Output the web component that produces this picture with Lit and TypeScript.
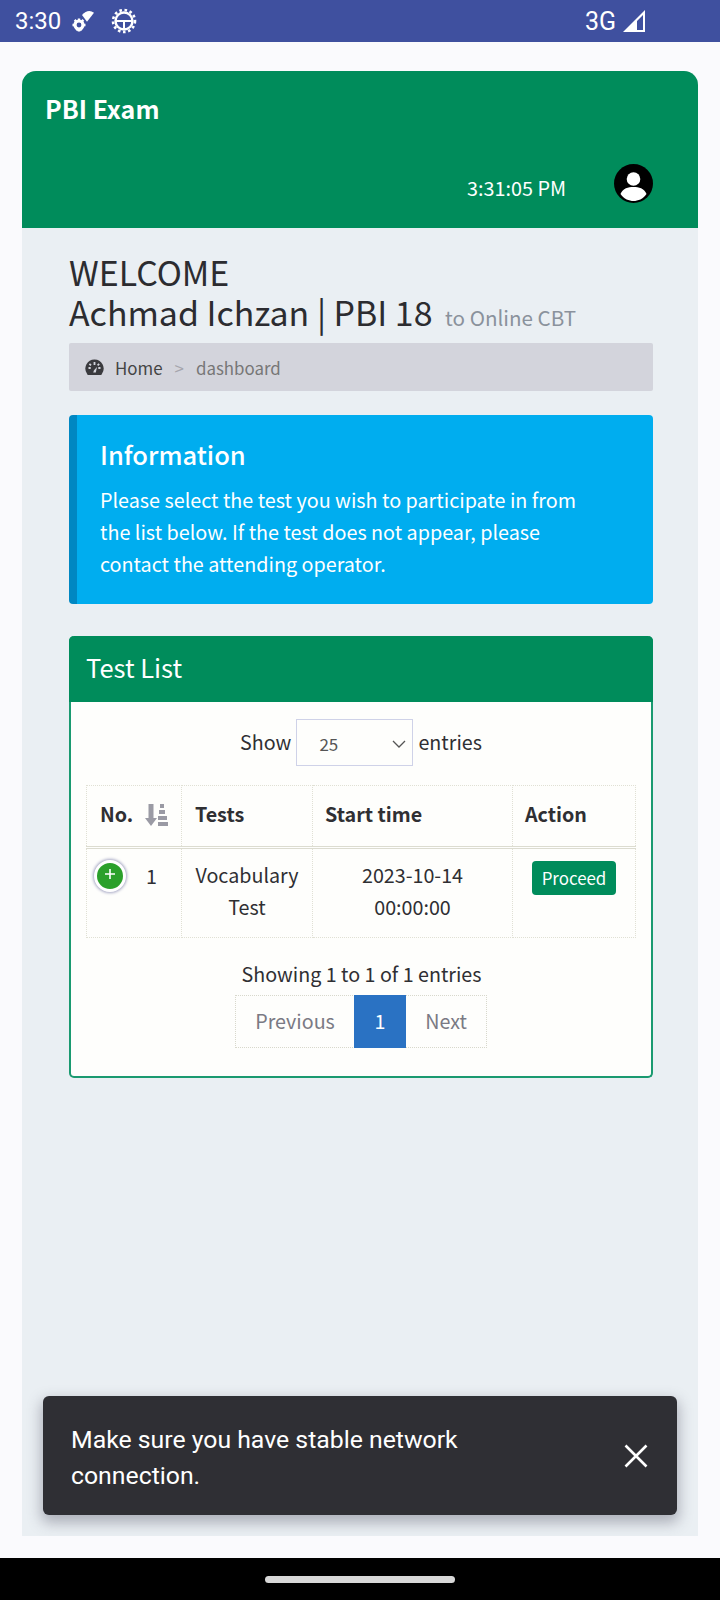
import { LitElement, html, css } from "lit";
import { customElement } from "lit/decorators.js";

@customElement("app-root")
export class AppRoot extends LitElement {
  static styles = css`
    :host {
      display: flex;
      flex-direction: column;
      width: 720px;
      height: 1600px;
      overflow: hidden;
      font-family: "Noto Sans CJK SC", "Noto Sans", sans-serif;
      color: #2f2f33;
      background: #fafafd;
    }
    * { box-sizing: border-box; }
    .status {
      height: 42px;
      flex: none;
      background: #3f509f;
      color: #fff;
      font-family: Roboto, sans-serif;
      font-size: 24px;
      display: flex;
      align-items: center;
      padding: 0 75px 0 15px;
      gap: 11px;
    }
    .status .spacer { flex: 1; }
    .status .net { font-size: 25px; margin-right: -4px; }
    .view {
      flex: 1;
      min-height: 0;
      padding: 29px 22px 22px;
      display: flex;
    }
    .shell {
      flex: 1;
      position: relative;
      overflow: hidden;
      background: #eaeff3;
      border-radius: 14px 14px 0 0;
    }
    .top {
      height: 157px;
      background: #008c5b;
      color: #fff;
      padding: 20px 45px 0 23px;
      display: flex;
      flex-direction: column;
    }
    .brand { font-size: 25px; font-weight: 700; line-height: 34px; height: 73px; }
    .top-row { display: flex; align-items: center; justify-content: flex-end; gap: 48px; }
    .clock { font-size: 19.8px; line-height: 28px; padding-top: 8px; }
    .avatar { width: 39px; height: 39px; display: block; }
    .content { padding: 24px 45px 0 47px; }
    h1 {
      margin: 0;
      font-size: 33.9px;
      font-weight: 400;
      line-height: 40px;
      color: #2c2c30;
    }
    h1 small { font-size: 20.6px; color: #8a929c; margin-left: 5px; font-weight: 400; }
    .crumb {
      margin-top: 6px;
      height: 48px;
      background: #d3d4dc;
      border-radius: 2px;
      display: flex;
      align-items: center;
      padding: 0 16px;
      font-size: 16.9px;
      color: #444;
    }
    .crumb svg { width: 19px; height: 17px; margin: 0 11px 0 0; }
    .crumb .sep { color: #a5a5ad; margin: 0 12px; }
    .crumb .cur { color: #777; }
    .callout {
      margin-top: 24px;
      height: 189px;
      background: #00adef;
      border-left: 8px solid #0087c2;
      border-radius: 4px;
      color: #fff;
      padding: 21px 60px 0 23px;
    }
    .callout h4 { margin: 0 0 12px; font-size: 25.5px; font-weight: 500; line-height: 36px; }
    .callout p { margin: 0; font-size: 19.75px; line-height: 32px; }
    .card {
      margin-top: 32px;
      height: 442px;
      border: 2px solid #1a9a70;
      border-top: 0;
      border-radius: 5px;
      background: #fefefc;
    }
    .card-head {
      margin: 0 -2px;
      height: 66px;
      background: #008c5b;
      border-radius: 5px 5px 0 0;
      color: #fff;
      font-size: 25.5px;
      line-height: 62px;
      padding-left: 17px;
    }
    .length {
      margin-top: 17px;
      display: flex;
      align-items: center;
      justify-content: center;
      gap: 5px;
      font-size: 19.7px;
      line-height: 47px;
    }
    .length > span { margin-top: -2px; }
    .select {
      width: 117px;
      height: 47px;
      border: 1px solid #cfd2e8;
      display: flex;
      align-items: center;
      justify-content: space-between;
      padding: 2px 6px 0 22px;
      font-size: 17px;
      color: #555;
    }
    .select svg { width: 14px; height: 8px; }
    table {
      margin: 19px 0 0 15px;
      width: 549px;
      border-collapse: collapse;
      table-layout: fixed;
      font-size: 19.7px;
    }
    th, td { border: 1px dotted #e0e0d4; }
    th {
      height: 62px;
      font-weight: 700;
      text-align: left;
      padding: 0 12px 5px;
      border-bottom: 3px double #dcdcd0;
    }
    th.tests { padding-left: 13px; }
    td { height: 90px; text-align: center; line-height: 32px; padding: 10px 8px 0; vertical-align: top; }
    th.no { padding-left: 13px; }
    .no-in { display: flex; align-items: center; justify-content: space-between; }
    .no-in svg { width: 24px; height: 24px; margin-top: 3px; }
    .rowno { display: flex; align-items: center; gap: 20px; margin-left: 1px; }
    td.first { padding: 11px 0 0 6px; }
    .plus {
      width: 32px;
      height: 32px;
      flex: none;
      border-radius: 50%;
      background: #2ba02b;
      border: 3px solid #fff;
      box-shadow: 0 0 3px 1px #a6a7c4;
      color: #fff;
      display: flex;
      align-items: center;
      justify-content: center;
    }
    .plus svg { width: 12px; height: 12px; margin-top: -4px; }
    .btn {
      display: inline-block;
      width: 84px;
      height: 34px;
      background: #008c5b;
      color: #fff;
      border-radius: 4px;
      font-size: 16.9px;
      line-height: 33px;
      margin-top: 2px;
    }
    .info { margin-top: 20px; text-align: center; font-size: 19.7px; line-height: 32px; padding-left: 1px; }
    .pager {
      margin: 5px 0 0 164px;
      display: flex;
      width: 252px;
      height: 53px;
      border: 1px dotted #d8d8cc;
      font-size: 19.7px;
      color: #7a7a84;
      line-height: 49px;
      text-align: center;
    }
    .pager .prev { width: 118px; }
    .pager .cur { width: 52px; background: #2a72c3; color: #fff; margin: -1px 0; line-height: 51px; }
    .pager .next { flex: 1; }
    .toast {
      position: absolute;
      left: 21px;
      top: 1325px;
      width: 634px;
      height: 119px;
      background: #2f2f34;
      color: #fff;
      border-radius: 6px;
      box-shadow: 0 6px 14px 2px rgba(60, 60, 80, 0.35);
      font-family: Roboto, sans-serif;
      font-size: 24.8px;
      line-height: 36px;
      display: flex;
      align-items: center;
      padding: 4px 29px 0 28px;
      justify-content: space-between;
    }
    .toast span { width: 440px; }
    .toast svg { width: 24px; height: 24px; margin-top: -4px; }
    .nav {
      height: 42px;
      flex: none;
      background: #000;
      display: flex;
      align-items: center;
      justify-content: center;
    }
    .nav i { display: block; width: 190px; height: 7px; border-radius: 4px; background: #d8d8d8; }
  `;

  render() {
    return html`
      <div class="status">
        <span>3:30</span>
        <svg width="26" height="24" viewBox="0 0 26 24" fill="#fff">
          <path d="M10 6 Q16 -0.5 22 3.7 L15 12.7 Z" />
          <circle cx="7" cy="16" r="4" fill="none" stroke="#fff" stroke-width="3.2" />
          <path d="M5.8 9.5h2.4v2.5H5.8zM5.8 20h2.4v2.5H5.8zM0.5 14.8H3v2.4H.5zM11 14.8h2.5v2.4H11z" />
          <path d="M1.8 11.8l1.7-1.7 1.6 1.6-1.7 1.7zM10.5 20.5l-1.7 1.7-1.6-1.6 1.7-1.7zM12.2 11.8l-1.7-1.7-1.6 1.6 1.7 1.7zM3.5 20.5l1.7 1.7 1.6-1.6-1.7-1.7z" />
        </svg>
        <svg width="26" height="26" viewBox="0 0 26 26" fill="none" stroke="#fff" style="margin-left:2px">
          <circle cx="13" cy="13" r="8.5" stroke-width="2.4" />
          <path d="M4.5 13h17M13 13v8" stroke-width="2" />
          <circle cx="13" cy="13" r="11" stroke-width="2.6" stroke-dasharray="2.6 2.6" />
        </svg>
        <span class="spacer"></span>
        <span class="net">3G</span>
        <svg width="22" height="22" viewBox="0 0 22 22" fill="#fff">
          <path d="M22 0V22H0Z M20 5 L14 11 V20 H20Z" fill-rule="evenodd" />
        </svg>
      </div>
      <div class="view">
        <div class="shell">
          <div class="top">
            <div class="brand">PBI Exam</div>
            <div class="top-row">
              <span class="clock">3:31:05 PM</span>
              <svg class="avatar" viewBox="0 0 39 39">
                <circle cx="19.5" cy="19.5" r="19.5" fill="#000" />
                <circle cx="19.5" cy="15" r="6.8" fill="#fff" />
                <path d="M6.5 30 C9 24 14 23 19.5 23 C25 23 30 24 32.5 30 C29 35 24 37 19.5 37 C15 37 10 35 6.5 30Z" fill="#fff" />
              </svg>
            </div>
          </div>
          <div class="content">
            <h1>WELCOME<br />Achmad Ichzan | PBI 18 <small>to Online CBT</small></h1>
            <div class="crumb">
              <svg viewBox="0 0 19 17">
                <path
                  fill="#3a3a3e"
                  fill-rule="evenodd"
                  d="M9.5 0.5a9 9 0 0 1 7.6 14l-0.8 1.5H2.7l-0.8-1.5A9 9 0 0 1 9.5 0.5Z M8.6 3v3h1.8V3Z M3.5 8v2h2.2V8Z M13.3 8v2h2.2V8Z M5 4.2 3.8 5.4 5.4 7 6.6 5.8Z M13.6 4.2 12 5.8 13.2 7 14.8 5.4Z M8.2 13.5h2.6L12 8 9 11.2Z"
                />
              </svg>
              <span>Home</span><span class="sep">&gt;</span><span class="cur">dashboard</span>
            </div>
            <div class="callout">
              <h4>Information</h4>
              <p>Please select the test you wish to participate in from the list below. If the test does not appear, please contact the attending operator.</p>
            </div>
            <div class="card">
              <div class="card-head">Test List</div>
              <div class="length">
                <span>Show</span>
                <div class="select">
                  <span>25</span>
                  <svg viewBox="0 0 14 8" fill="none" stroke="#555" stroke-width="1.3"><path d="M1 1l6 6 6-6" /></svg>
                </div>
                <span>entries</span>
              </div>
              <table>
                <colgroup>
                  <col style="width:95px" /><col style="width:131px" /><col style="width:200px" /><col style="width:123px" />
                </colgroup>
                <thead>
                  <tr>
                    <th class="no">
                      <div class="no-in">
                        <span>No.</span>
                        <svg viewBox="0 0 24 24" fill="#9a9aa4">
                          <path d="M3.5 1h5v14h3.5L6 23 0 15h3.5Z" />
                          <path d="M15 1h4v4h-4zM14 7h6v4h-6zM13 13h9v4h-9zM13 19h10v4H13z" />
                        </svg>
                      </div>
                    </th>
                    <th class="tests">Tests</th>
                    <th>Start time</th>
                    <th>Action</th>
                  </tr>
                </thead>
                <tbody>
                  <tr>
                    <td class="first">
                      <div class="rowno">
                        <div class="plus">
                          <svg viewBox="0 0 12 12" fill="none" stroke="#fff" stroke-width="1.6"><path d="M6 1v10M1 6h10" /></svg>
                        </div>
                        <span>1</span>
                      </div>
                    </td>
                    <td>Vocabulary Test</td>
                    <td>2023-10-14<br />00:00:00</td>
                    <td><span class="btn">Proceed</span></td>
                  </tr>
                </tbody>
              </table>
              <div class="info">Showing 1 to 1 of 1 entries</div>
              <div class="pager">
                <span class="prev">Previous</span>
                <span class="cur">1</span>
                <span class="next">Next</span>
              </div>
            </div>
          </div>
          <div class="toast">
            <span>Make sure you have stable network connection.</span>
            <svg viewBox="0 0 24 24" fill="none" stroke="#fff" stroke-width="2.6"><path d="M1.5 1.5l21 21M22.5 1.5l-21 21" /></svg>
          </div>
        </div>
      </div>
      <div class="nav"><i></i></div>
    `;
  }
}
